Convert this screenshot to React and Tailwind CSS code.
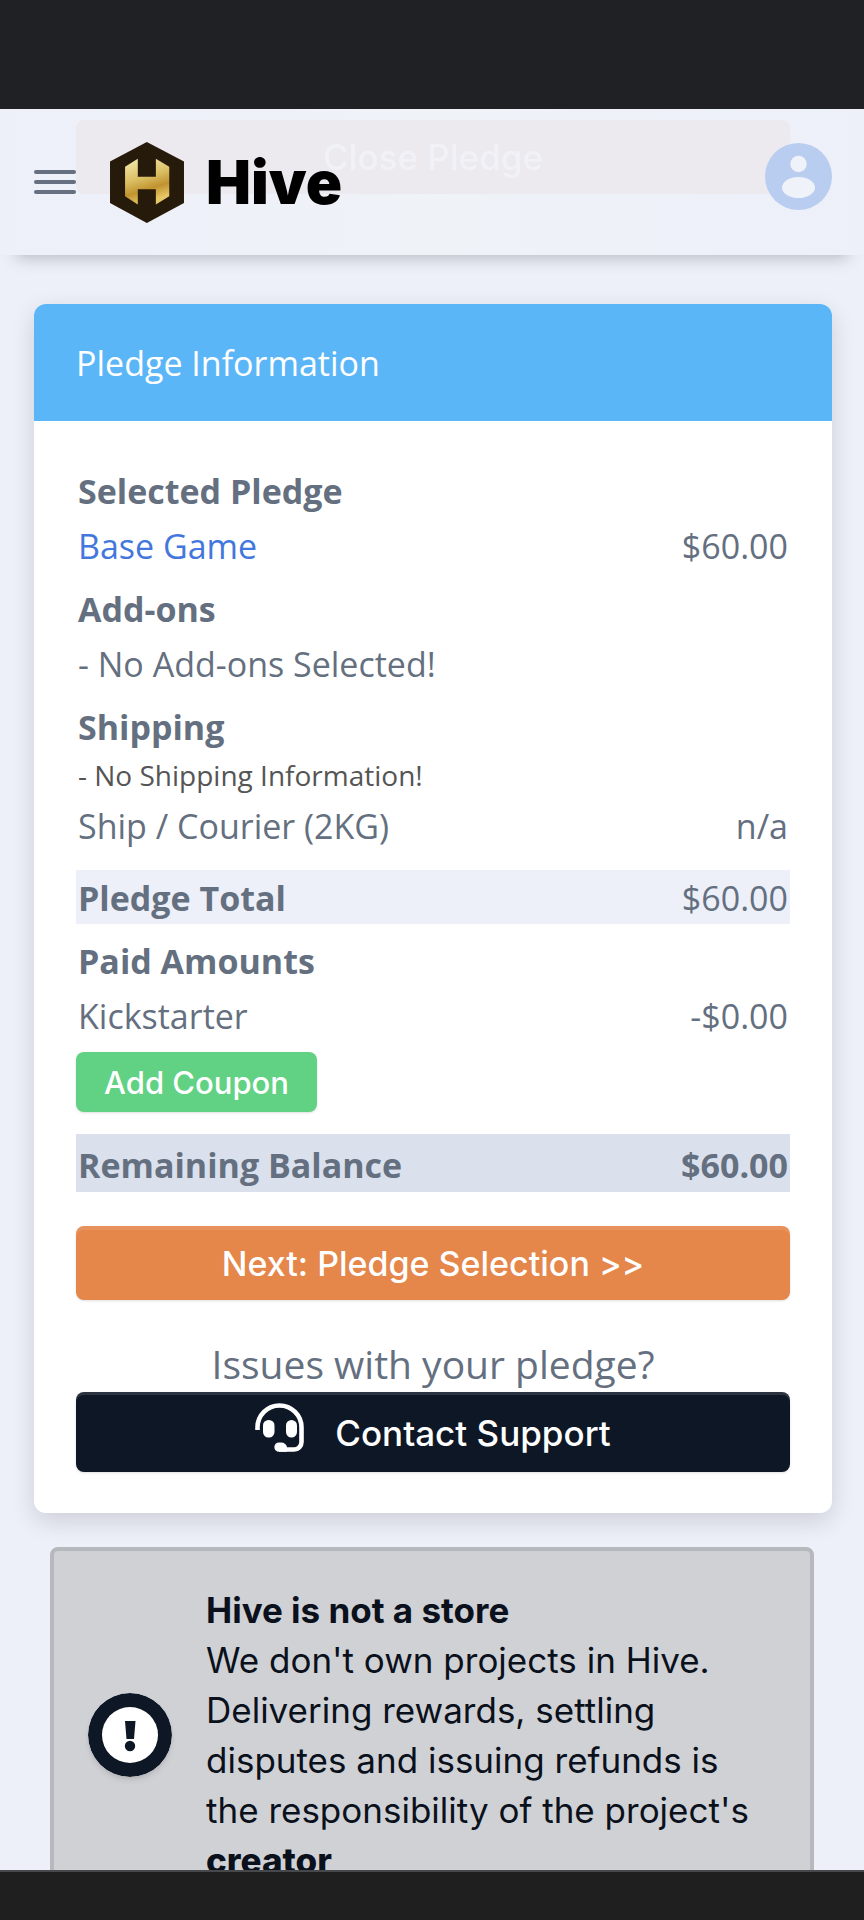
const sections = [
    {
        title: 'Selected Pledge',
        rows: [{ label: 'Base Game', value: '$60.00', href: '#base-game' }],
    },
    {
        title: 'Add-ons',
        rows: [{ label: '- No Add-ons Selected!', value: '' }],
    },
    {
        title: 'Shipping',
        note: '- No Shipping Information!',
        rows: [{ label: 'Ship / Courier (2KG)', value: 'n/a' }],
    },
];

export default function App() {
    return (
        <div className="flex h-screen flex-col overflow-hidden bg-[#edf0f9] font-['Open_Sans',sans-serif] text-[#646f80]">
            {/* System status bar */}
            <div className="h-[109px] shrink-0 bg-[#202124]"></div>

            <Header />

            <main className="min-h-0 flex-1 overflow-hidden pt-[49px] pr-8 pl-[34px]">
                <PledgeCard />
                <StoreNotice />
            </main>

            {/* System navigation bar */}
            <div className="z-10 h-[50px] shrink-0 border-t-2 border-[#47484b] bg-[#1f1f1f]"></div>
        </div>
    );
}

function Header() {
    return (
        <header className="relative z-10 flex h-[146px] shrink-0 items-center bg-linear-to-r from-[#edf0f9] via-[#eff2f7] to-[#edf0f9] pr-8 pl-[34px] shadow-[0_18px_16px_-16px_rgba(0,0,0,0.25)]">
            {/* Button scrolled under the translucent header */}
            <button
                type="button"
                className="absolute top-[11px] right-[74px] left-[76px] h-[74px] rounded-lg bg-[#ece9ef] font-['Inter',sans-serif] text-[35px] font-medium text-[#f1f2f8]"
            >
                Close Pledge
            </button>

            <button type="button" aria-label="Menu" className="relative flex flex-col gap-[6px]">
                <span className="h-1 w-[42px] rounded-full bg-[#667080]"></span>
                <span className="h-1 w-[42px] rounded-full bg-[#667080]"></span>
                <span className="h-1 w-[42px] rounded-full bg-[#667080]"></span>
            </button>

            <a href="#home" className="relative ml-[34px] flex items-center gap-[22px]">
                <HiveLogo />
                <span className="font-['Inter',sans-serif] text-[60px] leading-none font-black text-black">Hive</span>
            </a>

            <button type="button" aria-label="Account" className="relative mb-3 ml-auto">
                <svg viewBox="0 0 67 67" className="h-[67px] w-[67px]">
                    <circle cx="33.5" cy="33.5" r="33.5" fill="#b9cdf0" />
                    <circle cx="33.5" cy="21" r="8.2" fill="#eff2f8" />
                    <ellipse cx="33.5" cy="44.5" rx="16.5" ry="10.6" fill="#eff2f8" />
                </svg>
            </button>
        </header>
    );
}

function PledgeCard() {
    return (
        <section className="overflow-hidden rounded-xl bg-white shadow-[0_8px_24px_rgba(0,0,0,0.14)]">
            <h2 className="bg-[#5bb6f8] px-[42px] pt-[34px] pb-8 text-[34px] leading-[51px] text-white">Pledge Information</h2>

            <div className="px-[42px] pt-[33px] pb-[41px]">
                <table className="w-full text-[34px] leading-[51px]">
                    {sections.map((section) => (
                        <tbody key={section.title}>
                            <TitleRow title={section.title} />
                            {section.note && (
                                <tr>
                                    <td colSpan={2} className="px-0.5 text-[28px] leading-[44px] text-[#555]">{section.note}</td>
                                </tr>
                            )}
                            {section.rows.map((row) => (
                                <LineRow key={row.label} {...row} />
                            ))}
                        </tbody>
                    ))}
                    <tbody>
                        <tr className="h-[18px]"><td colSpan={2}></td></tr>
                        <tr className="bg-[#edf0f8]">
                            <th scope="row" className="px-0.5 pt-[3px] text-left font-bold">Pledge Total</th>
                            <td className="px-0.5 pt-[3px] text-right">$60.00</td>
                        </tr>
                    </tbody>
                    <tbody>
                        <TitleRow title="Paid Amounts" />
                        <LineRow label="Kickstarter" value="-$0.00" />
                        <tr>
                            <td colSpan={2} className="pt-2.5 pb-[22px]">
                                <button
                                    type="button"
                                    className="block h-[60px] rounded-lg bg-[#61d184] px-7 font-['Inter',sans-serif] text-[31px] font-medium text-white shadow-sm"
                                >
                                    Add Coupon
                                </button>
                            </td>
                        </tr>
                    </tbody>
                    <tfoot>
                        <tr className="bg-[#dae1ed] font-bold">
                            <th scope="row" className="px-0.5 pt-1.5 pb-px text-left">Remaining Balance</th>
                            <td className="px-0.5 pt-1.5 pb-px text-right">$60.00</td>
                        </tr>
                    </tfoot>
                </table>

                <button
                    type="button"
                    className="mt-[34px] h-[74px] w-full rounded-lg bg-[#e5864b] font-['Inter',sans-serif] text-[34px] font-medium text-white shadow-sm inset-shadow-[0_4px_0_rgba(255,255,255,0.1)]"
                >
                    Next: Pledge Selection &gt;&gt;
                </button>

                <p className="mt-9 text-center text-[39px] leading-[56px]">Issues with your pledge?</p>
                <button
                    type="button"
                    className="flex h-20 w-full items-center justify-center gap-[30px] rounded-lg bg-[#0e1726] font-['Inter',sans-serif] text-[35px] font-medium text-white shadow-sm inset-shadow-[0_3px_0_rgba(255,255,255,0.12)]"
                >
                    <HeadsetIcon />
                    <span className="pt-0.5">Contact Support</span>
                </button>
            </div>
        </section>
    );
}

function TitleRow({ title }) {
    return (
        <tr>
            <th colSpan={2} className="px-0.5 pt-3 text-left font-bold">{title}</th>
        </tr>
    );
}

function LineRow({ label, value, href }) {
    return (
        <tr>
            <td className="px-0.5 pt-1">
                {href ? <a href={href} className="text-[#4377dd]">{label}</a> : label}
            </td>
            <td className="px-0.5 pt-1 text-right">{value}</td>
        </tr>
    );
}

function StoreNotice() {
    return (
        <aside className="mr-[18px] ml-4 mt-[34px] flex items-center gap-[34px] rounded-lg border-4 border-[#b5b8bd] bg-[#d0d1d5] px-[34px] py-[34px] font-['Inter',sans-serif] text-[#0b111c]">
            <svg viewBox="0 0 84 84" className="h-[84px] w-[84px] shrink-0 rounded-full shadow-md">
                <circle cx="42" cy="42" r="42" fill="#0e1726" />
                <circle cx="42" cy="42" r="28" fill="#fff" />
                <path d="M37 28h10.500l-1.500 18h-7.500z" fill="#0e1726" />
                <circle cx="42" cy="53" r="5.200" fill="#0e1726" />
            </svg>
            <div className="flex-1 text-[35px] leading-[50px]">
                <p className="font-bold">Hive is not a store</p>
                <p>
                    We don't own projects in Hive. Delivering rewards, settling disputes and issuing refunds is the
                    responsibility of the project's <a href="#creator" className="font-extrabold">creator</a>
                </p>
            </div>
        </aside>
    );
}

function HiveLogo() {
    return (
        <svg viewBox="0 0 221 242" className="h-[81px] w-[74px]">
            <defs>
                <linearGradient id="gold" x1="0" y1="0" x2="0.3" y2="1">
                    <stop offset="0" stopColor="#f6edb0" />
                    <stop offset="0.5" stopColor="#dabd62" />
                    <stop offset="0.75" stopColor="#c1932f" />
                    <stop offset="1" stopColor="#e6c765" />
                </linearGradient>
            </defs>
            <path d="M110 0 221 58V182L110 242 0 182V58z" fill="#261a0b" />
            <path d="M45 74 83 50V104H137V50L177 74V162L137 187V141H83V187L45 162z" fill="url(#gold)" />
        </svg>
    );
}

function HeadsetIcon() {
    return (
        <svg viewBox="0 0 50 50" className="mb-2 h-[50px] w-[50px]" fill="none">
            <path
                d="M2.500 27V24.500a22 22 0 0 1 22-22a22 22 0 0 1 22 22V39a7.500 7.500 0 0 1-7.500 7.500H24"
                stroke="#fff"
                strokeWidth="4.600"
            />
            <rect x="8" y="17" width="11.500" height="17.500" rx="5.500" fill="#fff" />
            <rect x="31" y="17" width="11" height="17.500" rx="5.500" fill="#fff" />
            <path d="M24 39.500h2a6 5 0 0 1 6 4.800v4.500h-8a4.650 4.650 0 0 1 0-9.300z" fill="#fff" />
        </svg>
    );
}
